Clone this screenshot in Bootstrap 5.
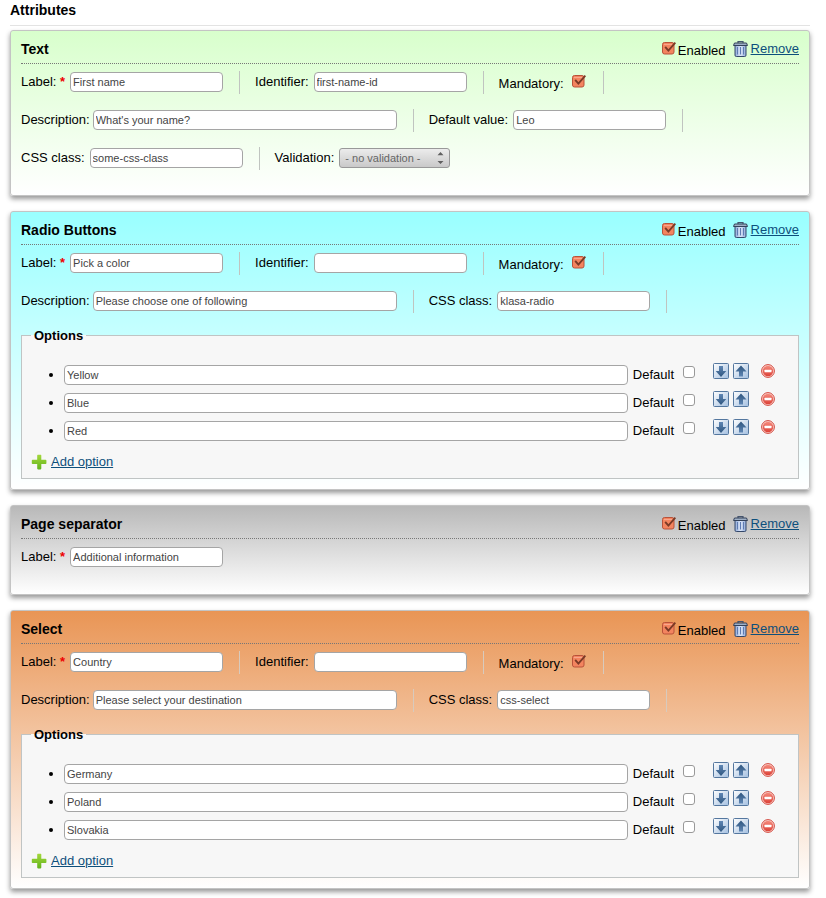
<!DOCTYPE html>
<html lang="en">
<head>
<meta charset="utf-8">
<meta name="viewport" content="width=device-width, initial-scale=1">
<title>Attributes</title>
<link href="https://cdn.jsdelivr.net/npm/bootstrap@5.3.0/dist/css/bootstrap.min.css" rel="stylesheet">
<style>
body { font: 13px/16px "Liberation Sans", Arial, sans-serif; color: #000; background: #fff; }
.page { padding: 0 16px 9px 10px; }
.page-title { font-size: 14px; line-height: 20px; padding-bottom: 5px; margin-bottom: 4px; border-bottom: 1px solid #e3e3e3; }
.stack { gap: 15px; }
.panel { padding: 10px; border: 1px solid #c4c4c4; border-radius: 3px; box-shadow: 0 3px 5px #999; }
.panel-text { background: linear-gradient(#d8ffcc, #fff); }
.panel-radio { background: linear-gradient(#99ffff, #fff); }
.panel-separator { background: linear-gradient(#b8b8b8, #fff); }
.panel-select { background: linear-gradient(#e99555, #fff); }
.panel-head { height: 23px; border-bottom: 1px dotted #777; margin-bottom: 7px; }
.panel-head h2 { font-size: 14px; line-height: 16px; }
a { color: #0d4f7c; }
a:hover { color: #08324f; }
.fields { margin-bottom: 15px; }
.field-item { height: 23px; padding: 0 16px 2px 0; margin-right: 15px; border-right: 1px solid #c0c4c0; gap: 5px; }
.field-item.snug { gap: 3px; }
.field-item.last { border: 0; }
.panel-select .field-item { border-color: #d8cabd; }
.req { color: #e00; font-weight: bold; }
.txt { width: 153px; height: 20px; padding: 0 2px; font-size: 11px; line-height: 16px; color: #444; background: #fff; border: 1px solid #a5a5a5; border-radius: 4px; }
.txt.wide { width: 304px; }
.pick { width: 111px; height: 20px; padding: 0 5px; font-size: 11px; line-height: 16px; color: #666; border: 1px solid #999; border-radius: 3px; appearance: none;
  background: url("data:image/svg+xml,%3Csvg xmlns='http://www.w3.org/2000/svg' width='7' height='12' viewBox='0 0 7 12'%3E%3Cpath d='M.5 3.3 3.5 0l3 3.3zM.5 9h6l-3 3z' fill='%23606060'/%3E%3C/svg%3E") no-repeat right 5px center, linear-gradient(#ececec, #c9c9c9); }
.tick { appearance: none; width: 14px; height: 14px; margin: 0; flex: none; }
.tick:checked {
  background: url("data:image/svg+xml,%3Csvg xmlns='http://www.w3.org/2000/svg' viewBox='0 0 14 14'%3E%3Crect x='.5' y='1.5' width='11.5' height='11.5' rx='2' fill='%23f3845f' stroke='%23b9523a'/%3E%3Cpath d='M2 3.5h8' stroke='%23f9a68c'/%3E%3Cpath d='m3.2 5.8 3.2 3.8L13.4 1.6' fill='none' stroke='%237a3a26' stroke-width='1.9'/%3E%3C/svg%3E") no-repeat; }
.tick:not(:checked), .plain-tick { appearance: none; width: 12px; height: 12px; margin: 0; flex: none; background: #fff; border: 1px solid #999; border-radius: 3px; }
.plain-tick { margin: 0 18px 7px 9px; }
.plain-tick:checked { background: #666; }
.mandatory { gap: 8px; padding-bottom: 0; padding-right: 17px; }
.mandatory label { padding-top: 3px; }
.mandatory .tick { margin-bottom: 3px; }
.enabled { gap: 2px; margin-right: 7px; }
.enabled label { padding-top: 2px; }
.remove svg { margin-right: 3px; }
.opts { border: 1px solid #c0c4c4; background: #f7f7f7; padding: 0 23px 8px 9px; margin: 0; }
.opts legend { float: none; width: auto; margin: 0 0 18px; padding: 0 3px; font-size: 13px; line-height: 15px; font-weight: bold; }
.opts ul { padding-left: 33px; margin: 0 0 9px; }
.opt-row { height: 28px; }
.opt-row .txt { margin-right: 5px; min-width: 0; }
.tool-btn { border: 0; padding: 0; background: none; line-height: 0; margin: 0 4px 8px 0; }
.tool-btn.drop { margin: 0 0 8px 8px; }
.add svg { margin-right: 4px; }
</style>
<script src="https://cdn.jsdelivr.net/npm/bootstrap@5.3.0/dist/js/bootstrap.bundle.min.js"></script>
</head>
<body>
<svg class="position-absolute" width="0" height="0" aria-hidden="true">
  <defs>
    <linearGradient id="gBin" x1="0" x2="1"><stop offset="0" stop-color="#8fa9d8"/><stop offset=".5" stop-color="#dbe6f8"/><stop offset="1" stop-color="#8fa9d8"/></linearGradient>
    <linearGradient id="gBox" x1="0" y1="0" x2="1" y2="1"><stop offset="0" stop-color="#ffffff"/><stop offset="1" stop-color="#a3bfe0"/></linearGradient>
    <linearGradient id="gArrow" x1="0" y1="0" x2="0" y2="1"><stop offset="0" stop-color="#5f86b4"/><stop offset="1" stop-color="#2f567f"/></linearGradient>
    <linearGradient id="gArrowUp" x1="0" y1="0" x2="0" y2="1"><stop offset="0" stop-color="#2f567f"/><stop offset="1" stop-color="#5f86b4"/></linearGradient>
    <linearGradient id="gPlus" x1="0" y1="0" x2="0" y2="1"><stop offset="0" stop-color="#a4d83c"/><stop offset="1" stop-color="#62b41c"/></linearGradient>
    <linearGradient id="gRed" x1="0" y1="0" x2="0" y2="1"><stop offset="0" stop-color="#f58a7c"/><stop offset="1" stop-color="#dc4238"/></linearGradient>
  </defs>
  <symbol id="bin" viewBox="0 0 15 16">
    <path d="M5 2V.6h5V2" fill="none" stroke="#44546e" stroke-width="1.2"/>
    <path d="M2 4.5h11v9.7q0 1.3-1.3 1.3H3.300q-1.300 0-1.300-1.300z" fill="url(#gBin)" stroke="#34486a"/>
    <path d="M4.500 6v7.500M7.500 6v7.500M10.500 6v7.500" stroke="#5f7cb2"/>
    <path d="M1.500 2h12l1 2.500H.5z" fill="#9fb0c6" stroke="#34425a"/>
  </symbol>
  <symbol id="down" viewBox="0 0 16 16">
    <rect x=".5" y=".5" width="15" height="15" rx="1" fill="url(#gBox)" stroke="#54779f"/>
    <path d="M6 3h4v5h3.300L8 14 2.700 8H6z" fill="url(#gArrow)"/>
  </symbol>
  <symbol id="up" viewBox="0 0 16 16">
    <rect x=".5" y=".5" width="15" height="15" rx="1" fill="url(#gBox)" stroke="#54779f"/>
    <path d="M6 13.500h4V8.500h3.500L8 2.500 2.500 8.500H6z" fill="url(#gArrowUp)"/>
  </symbol>
  <symbol id="minus" viewBox="0 0 14 14">
    <circle cx="7" cy="7" r="6.400" fill="#fbd5cf" stroke="#d2483e"/>
    <circle cx="7" cy="7" r="5.200" fill="url(#gRed)"/>
    <rect x="3.500" y="5.700" width="7" height="2.600" rx=".5" fill="#fff"/>
  </symbol>
  <symbol id="plus" viewBox="0 0 16 16">
    <path d="M6.800.8h2.900q.6 0 .6.600v4.400h4.300q.8 0 .8.800v2.600q0 .8-.8.800h-4.300v4.600q0 .8-.8.800H7q-.8 0-.8-.8V10H1.600q-.8 0-.8-.8V6.600q0-.8.8-.8h4.600V1.400q0-.6.600-.6z" fill="url(#gPlus)"/>
  </symbol>
</svg>

<main class="page">
  <h1 class="page-title fw-bold">Attributes</h1>
  <form class="stack d-flex flex-column">

    <section class="panel panel-text">
      <header class="panel-head d-flex">
        <h2 class="fw-bold m-0 me-auto">Text</h2>
        <div class="enabled d-flex h-100 align-items-start"><input class="tick" type="checkbox" id="en1" checked><label for="en1">Enabled</label></div>
        <a href="#" class="remove d-flex align-items-center align-self-start"><svg width="15" height="16"><use href="#bin"/></svg>Remove</a>
      </header>
      <div class="fields d-flex">
        <div class="field-item d-flex align-items-center"><label for="l1">Label: <span class="req">*</span></label><input class="txt" type="text" id="l1" value="First name"></div>
        <div class="field-item d-flex align-items-center"><label for="i1">Identifier:</label><input class="txt" type="text" id="i1" value="first-name-id"></div>
        <div class="field-item mandatory d-flex align-items-center"><label for="m1">Mandatory:</label><input class="tick" type="checkbox" id="m1" checked></div>
      </div>
      <div class="fields d-flex">
        <div class="field-item snug d-flex align-items-center"><label for="d1">Description:</label><input class="txt wide" type="text" id="d1" value="What's your name?"></div>
        <div class="field-item d-flex align-items-center"><label for="v1">Default value:</label><input class="txt" type="text" id="v1" value="Leo"></div>
      </div>
      <div class="fields d-flex">
        <div class="field-item d-flex align-items-center"><label for="c1">CSS class:</label><input class="txt" type="text" id="c1" value="some-css-class"></div>
        <div class="field-item last d-flex align-items-center"><label for="s1">Validation:</label><select class="pick" id="s1"><option>- no validation -</option></select></div>
      </div>
    </section>

    <section class="panel panel-radio">
      <header class="panel-head d-flex">
        <h2 class="fw-bold m-0 me-auto">Radio Buttons</h2>
        <div class="enabled d-flex h-100 align-items-start"><input class="tick" type="checkbox" id="en2" checked><label for="en2">Enabled</label></div>
        <a href="#" class="remove d-flex align-items-center align-self-start"><svg width="15" height="16"><use href="#bin"/></svg>Remove</a>
      </header>
      <div class="fields d-flex">
        <div class="field-item d-flex align-items-center"><label for="l2">Label: <span class="req">*</span></label><input class="txt" type="text" id="l2" value="Pick a color"></div>
        <div class="field-item d-flex align-items-center"><label for="i2">Identifier:</label><input class="txt" type="text" id="i2"></div>
        <div class="field-item mandatory d-flex align-items-center"><label for="m2">Mandatory:</label><input class="tick" type="checkbox" id="m2" checked></div>
      </div>
      <div class="fields d-flex">
        <div class="field-item snug d-flex align-items-center"><label for="d2">Description:</label><input class="txt wide" type="text" id="d2" value="Please choose one of following"></div>
        <div class="field-item d-flex align-items-center"><label for="c2">CSS class:</label><input class="txt" type="text" id="c2" value="klasa-radio"></div>
      </div>
      <fieldset class="opts">
        <legend>Options</legend>
        <ul>
          <li><div class="opt-row d-flex align-items-center"><input class="txt flex-grow-1" type="text" aria-label="Option 1" value="Yellow"><label for="o21">Default</label><input class="plain-tick" type="checkbox" id="o21"><button type="button" class="tool-btn" aria-label="Move down"><svg width="16" height="16"><use href="#down"/></svg></button><button type="button" class="tool-btn" aria-label="Move up"><svg width="16" height="16"><use href="#up"/></svg></button><button type="button" class="tool-btn drop" aria-label="Delete option"><svg width="14" height="14"><use href="#minus"/></svg></button></div></li>
          <li><div class="opt-row d-flex align-items-center"><input class="txt flex-grow-1" type="text" aria-label="Option 2" value="Blue"><label for="o22">Default</label><input class="plain-tick" type="checkbox" id="o22"><button type="button" class="tool-btn" aria-label="Move down"><svg width="16" height="16"><use href="#down"/></svg></button><button type="button" class="tool-btn" aria-label="Move up"><svg width="16" height="16"><use href="#up"/></svg></button><button type="button" class="tool-btn drop" aria-label="Delete option"><svg width="14" height="14"><use href="#minus"/></svg></button></div></li>
          <li><div class="opt-row d-flex align-items-center"><input class="txt flex-grow-1" type="text" aria-label="Option 3" value="Red"><label for="o23">Default</label><input class="plain-tick" type="checkbox" id="o23"><button type="button" class="tool-btn" aria-label="Move down"><svg width="16" height="16"><use href="#down"/></svg></button><button type="button" class="tool-btn" aria-label="Move up"><svg width="16" height="16"><use href="#up"/></svg></button><button type="button" class="tool-btn drop" aria-label="Delete option"><svg width="14" height="14"><use href="#minus"/></svg></button></div></li>
        </ul>
        <div class="d-flex"><a href="#" class="add d-flex align-items-center"><svg width="16" height="16"><use href="#plus"/></svg>Add option</a></div>
      </fieldset>
    </section>

    <section class="panel panel-separator">
      <header class="panel-head d-flex">
        <h2 class="fw-bold m-0 me-auto">Page separator</h2>
        <div class="enabled d-flex h-100 align-items-start"><input class="tick" type="checkbox" id="en3" checked><label for="en3">Enabled</label></div>
        <a href="#" class="remove d-flex align-items-center align-self-start"><svg width="15" height="16"><use href="#bin"/></svg>Remove</a>
      </header>
      <div class="fields d-flex">
        <div class="field-item last d-flex align-items-center"><label for="l3">Label: <span class="req">*</span></label><input class="txt" type="text" id="l3" value="Additional information"></div>
      </div>
    </section>

    <section class="panel panel-select">
      <header class="panel-head d-flex">
        <h2 class="fw-bold m-0 me-auto">Select</h2>
        <div class="enabled d-flex h-100 align-items-start"><input class="tick" type="checkbox" id="en4" checked><label for="en4">Enabled</label></div>
        <a href="#" class="remove d-flex align-items-center align-self-start"><svg width="15" height="16"><use href="#bin"/></svg>Remove</a>
      </header>
      <div class="fields d-flex">
        <div class="field-item d-flex align-items-center"><label for="l4">Label: <span class="req">*</span></label><input class="txt" type="text" id="l4" value="Country"></div>
        <div class="field-item d-flex align-items-center"><label for="i4">Identifier:</label><input class="txt" type="text" id="i4"></div>
        <div class="field-item mandatory d-flex align-items-center"><label for="m4">Mandatory:</label><input class="tick" type="checkbox" id="m4" checked></div>
      </div>
      <div class="fields d-flex">
        <div class="field-item snug d-flex align-items-center"><label for="d4">Description:</label><input class="txt wide" type="text" id="d4" value="Please select your destination"></div>
        <div class="field-item d-flex align-items-center"><label for="c4">CSS class:</label><input class="txt" type="text" id="c4" value="css-select"></div>
      </div>
      <fieldset class="opts">
        <legend>Options</legend>
        <ul>
          <li><div class="opt-row d-flex align-items-center"><input class="txt flex-grow-1" type="text" aria-label="Option 1" value="Germany"><label for="o41">Default</label><input class="plain-tick" type="checkbox" id="o41"><button type="button" class="tool-btn" aria-label="Move down"><svg width="16" height="16"><use href="#down"/></svg></button><button type="button" class="tool-btn" aria-label="Move up"><svg width="16" height="16"><use href="#up"/></svg></button><button type="button" class="tool-btn drop" aria-label="Delete option"><svg width="14" height="14"><use href="#minus"/></svg></button></div></li>
          <li><div class="opt-row d-flex align-items-center"><input class="txt flex-grow-1" type="text" aria-label="Option 2" value="Poland"><label for="o42">Default</label><input class="plain-tick" type="checkbox" id="o42"><button type="button" class="tool-btn" aria-label="Move down"><svg width="16" height="16"><use href="#down"/></svg></button><button type="button" class="tool-btn" aria-label="Move up"><svg width="16" height="16"><use href="#up"/></svg></button><button type="button" class="tool-btn drop" aria-label="Delete option"><svg width="14" height="14"><use href="#minus"/></svg></button></div></li>
          <li><div class="opt-row d-flex align-items-center"><input class="txt flex-grow-1" type="text" aria-label="Option 3" value="Slovakia"><label for="o43">Default</label><input class="plain-tick" type="checkbox" id="o43"><button type="button" class="tool-btn" aria-label="Move down"><svg width="16" height="16"><use href="#down"/></svg></button><button type="button" class="tool-btn" aria-label="Move up"><svg width="16" height="16"><use href="#up"/></svg></button><button type="button" class="tool-btn drop" aria-label="Delete option"><svg width="14" height="14"><use href="#minus"/></svg></button></div></li>
        </ul>
        <div class="d-flex"><a href="#" class="add d-flex align-items-center"><svg width="16" height="16"><use href="#plus"/></svg>Add option</a></div>
      </fieldset>
    </section>

  </form>
</main>
</body>
</html>
